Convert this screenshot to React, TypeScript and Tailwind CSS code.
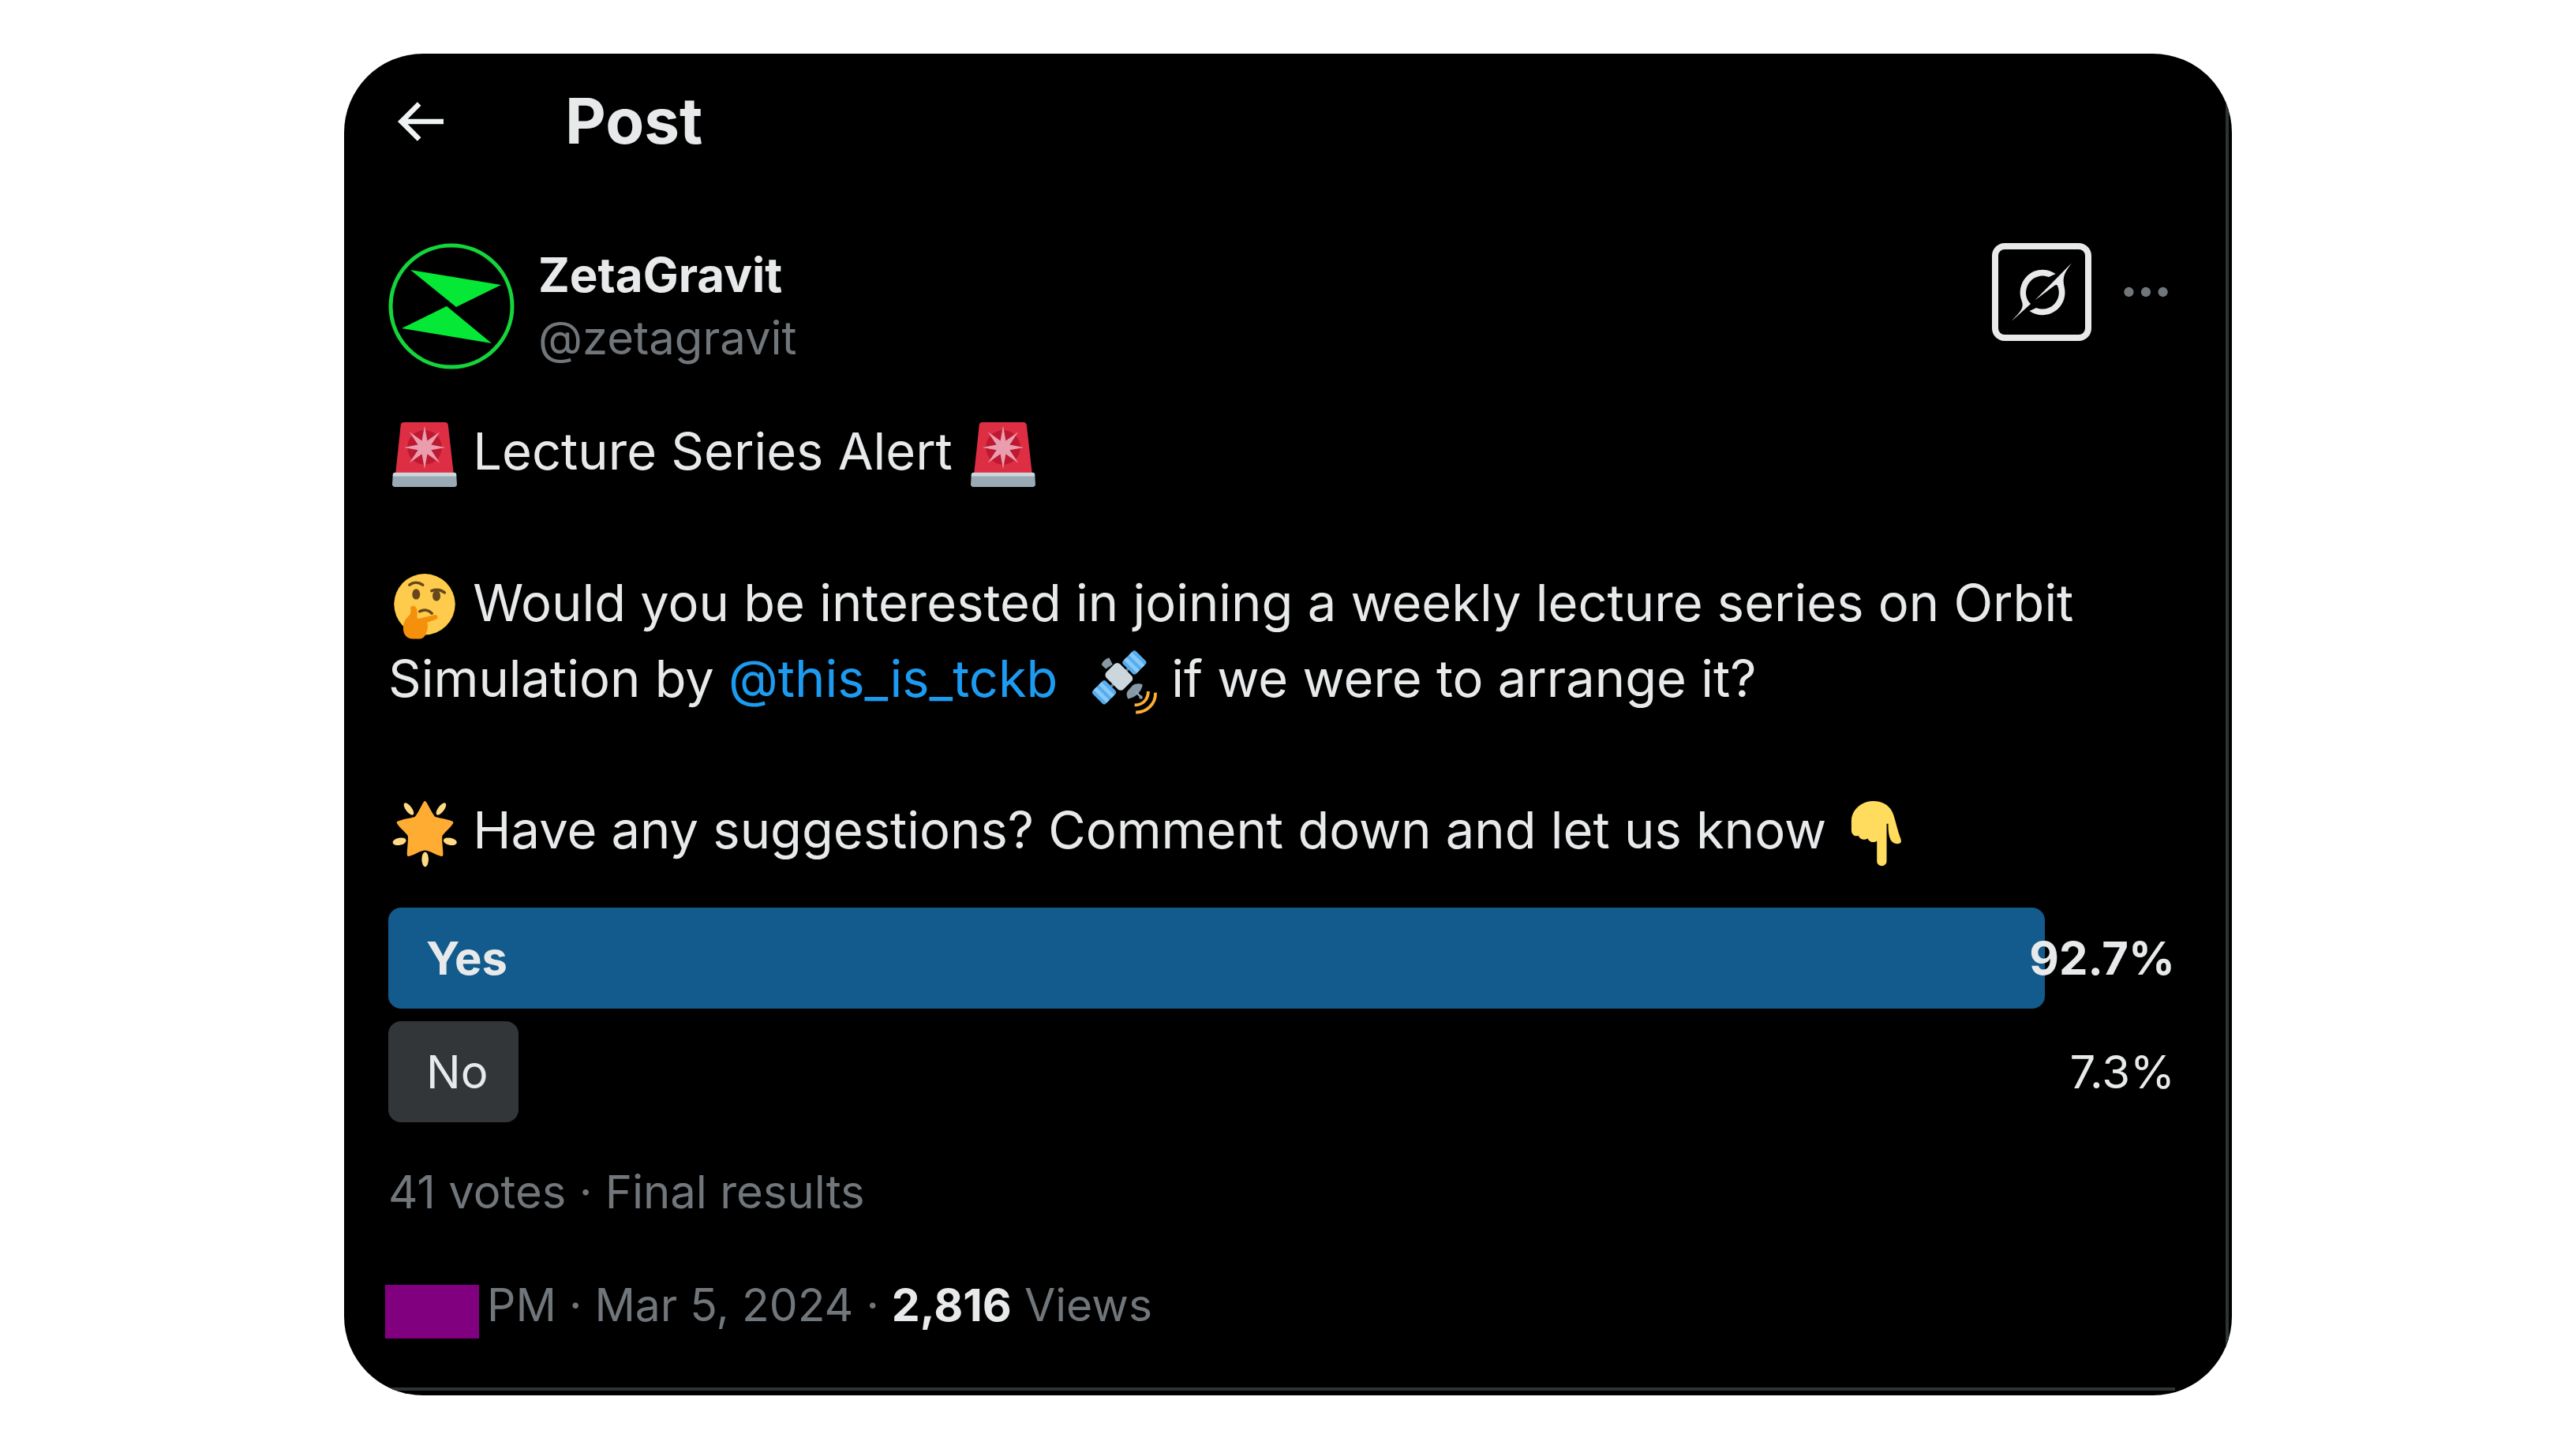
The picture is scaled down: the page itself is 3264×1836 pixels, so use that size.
import type { ReactNode } from "react";

type PollOption = {
  label: string;
  percent: number;
  winner: boolean;
};

const pollOptions: PollOption[] = [
  { label: "Yes", percent: 92.7, winner: true },
  { label: "No", percent: 7.3, winner: false },
];

function Emoji({ label, children }: { label: string; children: ReactNode }) {
  return (
    <svg
      role="img"
      aria-label={label}
      viewBox="0 0 36 36"
      className="inline-block size-[82px] ml-[5px] mr-[2px] -mt-4 -mb-1 align-[-18px] overflow-visible"
    >
      {children}
    </svg>
  );
}

function SirenEmoji() {
  return (
    <Emoji label="Police car light">
      <path fill="#DD2E44" d="M6.5 0h22.8c1 0 1.700.6 1.800 1.600L34.200 29H1.800L4.700 1.600C4.800.6 5.500 0 6.500 0z" />
      <ellipse cx="18" cy="14" rx="9.600" ry="9.600" fill="#BE1931" />
      <path
        fill="#EA9DAE"
        d="M18 2l1.500 8.300 6.900-4.900-4.700 7.100 7.800 1.500-7.800 1.500 4.700 7.100-6.900-4.900L18 26l-1.500-8.300-6.900 4.900 4.700-7.100L6.500 14l7.800-1.500-4.700-7.100 6.900 4.900z"
      />
      <path fill="#99AAB5" d="M.3 30h35.400l.3 4.500c0 .9-.6 1.500-1.500 1.500h-33C.6 36 0 35.400 0 34.500z" />
      <path fill="#CCD6DD" d="M1.500 28h33c.8 0 1.200.6 1.200 1.200v1H.3v-1c0-.7.5-1.200 1.200-1.200z" />
    </Emoji>
  );
}

function ThinkingEmoji() {
  return (
    <Emoji label="Thinking face">
      <circle cx="18" cy="17" r="17" fill="#FFCB4C" />
      <g fill="#65471B">
        <ellipse cx="13.300" cy="11.400" rx="2.200" ry="2.900" />
        <ellipse cx="24.600" cy="12.300" rx="2.200" ry="2.900" />
      </g>
      <g fill="none" stroke="#65471B" strokeWidth="1.600" strokeLinecap="round">
        <path d="M9.600 6.200c2.200-1.700 5-1.700 7.400 0" />
        <path d="M21.900 9.500c2.600-1 5-.8 7.200 1" />
        <path d="M15.300 20.900c2.400-1.200 5-.8 6.700 1.100" />
      </g>
      <path
        fill="#F4900C"
        d="M11.200 17.900c1.100-.2 2 .5 2.400 1.600.4 1.400.5 2.700.2 4.200-.1.900.3 1.400 1.200 1.200l8.200-2c1-.2 1.800.2 2 .9.200.8-.3 1.500-1.100 1.700l-4.700 1.600c.8 2.100.1 4.700-.9 6.800-.7 1.500-1.900 2.300-3.600 2.300h-3.600c-2.600 0-4.800-1.900-5.100-4.700-.2-1.900-.1-3.800.8-5.500.6-1.200 2-2.200 2.800-3.300.5-.9.500-2.200.4-3.200-.1-.8.200-1.500 1-1.600z"
      />
    </Emoji>
  );
}

function SatelliteEmoji() {
  return (
    <Emoji label="Satellite">
      <path stroke="#66757F" strokeWidth="1.500" d="M10 22L22 9.500" />
      <g transform="rotate(45 24.300 7.200)">
        <rect x="19.200" y="2.100" width="10.200" height="10.200" rx="1.500" fill="#55ACEE" />
        <path fill="#88C9F9" d="M19.200 4.200h10.200v2.200H19.200zM19.200 8.200h10.200v2.200H19.200z" />
      </g>
      <g transform="rotate(45 7.500 23.800)">
        <rect x="2.400" y="18.700" width="10.200" height="10.200" rx="1.500" fill="#55ACEE" />
        <path fill="#88C9F9" d="M2.400 20.800h10.200v2.200H2.400zM2.400 24.800h10.200v2.200H2.400z" />
      </g>
      <path fill="#8899A6" d="M10.300 4.600l1.900 3.700-3.800 2.500-2.200-2.100c-.4-1.200 2.100-3.900 4.100-4.100z" />
      <path fill="#8899A6" d="M28.900 19.500c-1.600-.8-4-.8-5.600.5l-2.700 3.100c-.9 1.300-.6 3 .2 4.300 4.200-.8 7.400-3.800 8.100-7.900z" />
      <rect x="9" y="9.700" width="13.500" height="10.800" rx="2.300" fill="#CCD6DD" transform="rotate(45 15.700 15.100)" />
      <path stroke="#99AAB5" strokeWidth="1" d="M25 23.500l2.800 2.800" />
      <circle cx="27.900" cy="26.600" r="1" fill="#8899A6" />
      <g fill="none" stroke="#FFAC33" strokeWidth="1.700">
        <path d="M32 23.300c0 4.400-2.900 7.600-7.600 7.600" />
        <path d="M36 24c.3 6-4.700 11.200-10.900 10.900" />
      </g>
    </Emoji>
  );
}

function StarEmoji() {
  return (
    <Emoji label="Glowing star">
      <path
        fill="#FFAC33"
        stroke="#FFAC33"
        strokeWidth="1.500"
        strokeLinejoin="round"
        d="M18.200.8c1.600 2.400 3.300 6.500 5.200 8.600 2.800 1 7.100 1.300 9.800 2.600-1.500 2.600-4.700 4.800-6.100 7.100-.5 3.400.6 7.500.4 10.900-2.900-.4-6.200-3.300-9.300-3.300S11.900 29.600 9 30c-.2-3.400.9-7.500.4-10.900C8 16.800 4.800 14.600 3.300 12c2.700-1.300 7-1.600 9.800-2.600 1.900-2.100 3.500-6.200 5.100-8.600z"
      />
      <g fill="#FFD983">
        <ellipse cx="9.200" cy="4.400" rx="1.700" ry="4" transform="rotate(-37 9.200 4.400)" />
        <ellipse cx="27.200" cy="4.400" rx="1.700" ry="4" transform="rotate(37 27.200 4.400)" />
        <ellipse cx="4" cy="22.500" rx="3.800" ry="2" transform="rotate(-12 4 22.500)" />
        <ellipse cx="32.200" cy="22.500" rx="3.800" ry="2" transform="rotate(12 32.200 22.500)" />
        <ellipse cx="18.300" cy="32.400" rx="1.900" ry="4.100" />
      </g>
    </Emoji>
  );
}

function PointDownEmoji() {
  return (
    <Emoji label="Backhand index pointing down">
      <path
        fill="#FFDC5D"
        d="M16 0c-6.600 0-12.100 4.900-12.100 11v5.200c0 2.300 1.800 3.800 4 3.100.5 1.900 3.100 2.800 5 1.500 1 1.900 3.200 2.800 5.200 1.400v11.200c0 3.600 5.400 3.600 5.400 0V12.600h.9c-.1 3.400.2 6.400 1.200 8.700 1.100 2.400 3.800 2.900 5.200 2.200 1-.5.900-1.400.5-2.500-1.700-4.600-2.500-8.700-3.800-12.800C25.900 2.900 21.800 0 16 0z"
      />
    </Emoji>
  );
}

function Avatar() {
  return (
    <svg viewBox="0 0 160 160" className="size-40 shrink-0" role="img" aria-label="ZetaGravit logo">
      <circle cx="80" cy="80" r="77" fill="#000" stroke="#14D53C" strokeWidth="5" />
      <path fill="#05E836" d="M28 34l115 19-57 28zM74 80l-57 28 114 19z" />
    </svg>
  );
}

function PollRow({ label, percent, winner }: PollOption) {
  return (
    <li
      className={`grid items-center h-32 text-[58px] leading-[80px] ${
        winner ? "font-bold" : "font-normal"
      }`}
    >
      <div
        className={`col-start-1 row-start-1 h-full rounded-2xl ${
          winner ? "bg-[#125b8c]" : "bg-[#333639]"
        }`}
        style={{ width: `${percent}%` }}
      />
      <div className="col-start-1 row-start-1 flex justify-between pl-12">
        <span>{label}</span>
        <span>{percent}%</span>
      </div>
    </li>
  );
}

function PostHeader() {
  return (
    <header className="flex items-center h-[172px]">
      <button type="button" aria-label="Back" className="mr-36">
        <svg viewBox="0 0 24 24" className="size-20" fill="#EFF3F4">
          <path d="M7.414 13l5.043 5.040-1.414 1.420L3.586 12l7.457-7.460 1.414 1.420L7.414 11H21v2H7.414z" />
        </svg>
      </button>
      <h1 className="pb-0.5 text-[80px] leading-[96px] font-bold">Post</h1>
    </header>
  );
}

function Author() {
  return (
    <div className="flex items-start mt-[68px]">
      <Avatar />
      <div className="flex flex-col ml-[30px] leading-[80px]">
        <a href="#profile" className="text-[60px] font-bold">
          ZetaGravit
        </a>
        <a href="#profile" className="text-[58px] text-[#71767b]">
          @zetagravit
        </a>
      </div>
      <div className="flex items-center gap-8 ml-auto">
        <button
          type="button"
          aria-label="Explain this post"
          className="flex items-center justify-center w-[126px] h-[124px] rounded-2xl border-8 border-[#e7e9ea]"
        >
          <svg viewBox="0 0 33 32" className="w-[76px] h-[74px]" fill="#E7E9EA">
            <path d="M12.745 20.540l10.970-8.190c.539-.4 1.307-.244 1.564.38 1.349 3.288.746 7.241-1.938 9.955-2.683 2.714-6.417 3.310-9.830 1.954l-3.728 1.745c5.347 3.697 11.840 2.782 15.898-1.324 3.219-3.255 4.216-7.692 3.284-11.693l.008.009c-1.351-5.878.332-8.227 3.782-13.031L33 0l-4.540 4.590v-.014L12.743 20.544m-2.263 1.987c-3.837-3.707-3.175-9.446.1-12.755 2.420-2.449 6.388-3.448 9.852-1.979l3.720-1.737c-.67-.49-1.530-1.017-2.515-1.387-4.455-1.854-9.789-.931-13.410 2.728-3.483 3.523-4.579 8.940-2.697 13.561 1.405 3.454-.899 5.898-3.220 8.364C1.490 30.200.666 31.074 0 32l10.478-9.466" />
          </svg>
        </button>
        <button type="button" aria-label="More">
          <svg viewBox="0 0 24 24" className="size-[74px]" fill="#71767B">
            <circle cx="5" cy="12" r="2" />
            <circle cx="12" cy="12" r="2" />
            <circle cx="19" cy="12" r="2" />
          </svg>
        </button>
      </div>
    </div>
  );
}

function App() {
  return (
    <div className="min-h-screen bg-white py-[68px] font-['Inter',sans-serif] text-[#e7e9ea]">
      <main className="w-full max-w-[2392px] mx-auto bg-black rounded-[100px] overflow-hidden pr-1 pb-1.5">
        <div className="border-r-4 border-[#2f3336] pr-16">
          <article className="border-b-4 border-[#2f3336] pl-14 pb-16">
            <PostHeader />
            <Author />
            <div className="mt-14 text-[65px] leading-[96px]">
              <p>
                <SirenEmoji /> Lecture Series Alert <SirenEmoji />
              </p>
              <p className="mt-24">
                <ThinkingEmoji /> Would you be interested in joining a weekly
                lecture series on Orbit{" "}
                Simulation by{" "}
                <a href="#mention" className="text-[#1d9bf0]">
                  @this_is_tckb
                </a>
                &nbsp; <SatelliteEmoji /> if we were to arrange it?
              </p>
              <p className="mt-24">
                <StarEmoji /> Have any suggestions? Comment down and let us know{" "}
                <PointDownEmoji />
              </p>
            </div>
            <ul className="flex flex-col gap-4 mt-[50px]">
              {pollOptions.map((option) => (
                <PollRow key={option.label} {...option} />
              ))}
            </ul>
            <p className="mt-12 text-[58px] leading-[80px] text-[#71767b]">
              41 votes · Final results
            </p>
            <div className="flex items-end gap-2.5 mt-16 text-[57px] leading-[80px] text-[#71767b]">
              <div className="w-[119px] h-[68px] -ml-1 -mb-0.5 bg-[#800080]" />
              <p>
                PM · Mar 5, 2024 ·{" "}
                <strong className="font-bold text-[#e7e9ea]">2,816</strong> Views
              </p>
            </div>
          </article>
        </div>
      </main>
    </div>
  );
}

export default App;
